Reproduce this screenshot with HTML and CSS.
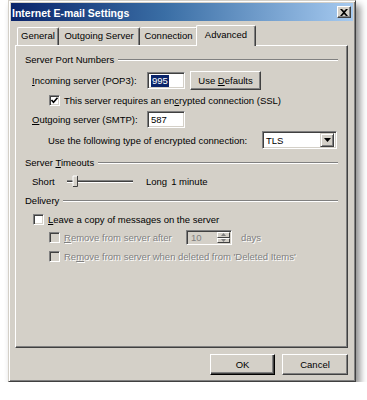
FILE: index.html
```html
<!DOCTYPE html>
<html>
<head>
<meta charset="utf-8">
<link rel="stylesheet" href="styles.css">
</head>
<body>
<div class="window">
  <div class="titlebar">
    <span class="title">Internet E-mail Settings</span>
    <span class="close"><svg width="8" height="7" viewBox="0 0 8 7"><path d="M0 0 L2 0 L4 2 L6 0 L8 0 L5 3.5 L8 7 L6 7 L4 5 L2 7 L0 7 L3 3.5 Z" fill="#000"/></svg></span>
  </div>
  <div class="body">
    <div class="tabs">
      <div class="tab t-general">General</div>
      <div class="tab t-out">Outgoing Server</div>
      <div class="tab t-conn">Connection</div>
      <div class="tab active t-adv">Advanced</div>
    </div>
    <div class="panel">
      <div class="group g-ports"><span>Server Port Numbers</span><i class="rule"></i></div>

      <div class="row r-in">
        <span class="label"><u>I</u>ncoming server (POP3):</span>
        <span class="field port"><span class="sel">995</span></span>
        <span class="btn defaults"><span>Use <u>D</u>efaults</span></span>
      </div>

      <div class="row r-ssl">
        <span class="cb"><svg width="9" height="9" viewBox="0 0 9 9"><path d="M1.5 4 L3.5 6.2 L7.5 1.8" fill="none" stroke="#000" stroke-width="1.6"/></svg></span>
        <span>This server requires an en<u>c</u>rypted connection (SSL)</span>
      </div>

      <div class="row r-out">
        <span class="label"><u>O</u>utgoing server (SMTP):</span>
        <span class="field port">587</span>
      </div>

      <div class="row r-enc">
        <span>Use the following type of encrypted connection:</span>
        <span class="select"><span class="val">TLS</span><span class="drop"><svg width="7" height="4" viewBox="0 0 7 4"><path d="M0 0 L7 0 L3.5 4 Z" fill="#000"/></svg></span></span>
      </div>

      <div class="group g-time"><span>Server <u>T</u>imeouts</span><i class="rule"></i></div>

      <div class="row r-slider">
        <span class="short">Short</span>
        <svg class="slider" width="66" height="12" viewBox="0 0 66 12">
          <rect x="0" y="5" width="66" height="1" fill="#808080"/>
          <rect x="0" y="6" width="66" height="1" fill="#404040"/>
          <rect x="0" y="7" width="66" height="1" fill="#ffffff"/>
          <rect x="6" y="1" width="5" height="10" fill="#d4d0c8"/>
          <path d="M6 11 V1 H10" fill="none" stroke="#ffffff" stroke-width="1"/>
          <path d="M10.5 1 V11.5 H6" fill="none" stroke="#404040" stroke-width="1"/>
        </svg>
        <span class="long">Long</span>
        <span class="minute">1 minute</span>
      </div>

      <div class="group g-del"><span>Delivery</span><i class="rule"></i></div>

      <div class="row r-leave">
        <span class="cb"></span>
        <span><u>L</u>eave a copy of messages on the server</span>
      </div>

      <div class="row r-after">
        <span class="cb dis"></span>
        <span class="dtext after"><u>R</u>emove from server after</span>
        <span class="spin"><span class="val">10</span><span class="arrows"><span class="ar"><svg width="5" height="3" viewBox="0 0 5 3"><path d="M0 3 L5 3 L2.5 0 Z" fill="#808080"/></svg></span><span class="ar"><svg width="5" height="3" viewBox="0 0 5 3"><path d="M0 0 L5 0 L2.5 3 Z" fill="#808080"/></svg></span></span></span>
        <span class="dtext days">days</span>
      </div>

      <div class="row r-deleted">
        <span class="cb dis"></span>
        <span class="dtext">Re<u>m</u>ove from server when deleted from 'Deleted Items'</span>
      </div>
    </div>
    <div class="buttons">
      <span class="btn ok">OK</span>
      <span class="btn cancel">Cancel</span>
    </div>
  </div>
</div>
</body>
</html>
```

FILE: styles.css
```css
html, body {
  margin: 0;
  padding: 0;
  background: #ffffff;
}

body {
  font-family: "Liberation Sans", Arial, sans-serif;
  font-size: 9.5px;
  color: #000;
}

u {
  text-decoration: underline;
  text-underline-offset: 1px;
}

.window {
  box-sizing: border-box;
  width: 348px;
  height: 382px;
  margin-left: 8px;
  background: #d4d0c8;
  border: 1px solid;
  border-color: #d4d0c8 #404040 #404040 #d4d0c8;
  box-shadow: inset 1px 1px 0 #ffffff, inset -1px -1px 0 #808080, 4px 5px 7px rgba(0, 0, 0, 0.45);
  padding: 2px;
}

.titlebar {
  height: 18px;
  display: flex;
  align-items: center;
  background: linear-gradient(to right, #0a246a, #3a6ea5 45%, #a6caf0);
  padding-left: 1px;
}

.title {
  flex: 1;
  color: #ffffff;
  font-weight: bold;
  font-size: 10.5px;
  line-height: 18px;
  padding-top: 1px;
}

.close {
  box-sizing: border-box;
  width: 14px;
  height: 12px;
  margin-right: 2px;
  background: #d4d0c8;
  border: 1px solid;
  border-color: #ffffff #404040 #404040 #ffffff;
  box-shadow: inset -1px -1px 0 #808080;
  display: flex;
  align-items: center;
  justify-content: center;
  padding-right: 1px;
}

.body {
  padding: 0 5px 0 4px;
}

.tabs {
  display: flex;
  height: 20px;
  margin-top: 4px;
  padding-left: 2px;
  position: relative;
  z-index: 1;
}

.tab {
  box-sizing: border-box;
  height: 18px;
  margin-top: 2px;
  border-top: 1px solid #ffffff;
  border-left: 1px solid #ffffff;
  border-right: 1px solid #404040;
  box-shadow: inset -1px 0 0 #808080;
  border-radius: 2px 2px 0 0;
  text-align: center;
  line-height: 16px;
  background: #d4d0c8;
}

.t-general { width: 42px; }
.t-out { width: 81px; border-left: none; }
.t-conn { width: 58px; border-left: none; }

.tab.active {
  width: 60px;
  height: 21px;
  margin-top: 0;
  margin-left: -2px;
  border-left: 1px solid #ffffff;
  line-height: 18px;
  position: relative;
  z-index: 2;
}

.panel {
  box-sizing: border-box;
  width: 333px;
  height: 303px;
  border: 1px solid;
  border-color: #ffffff #404040 #404040 #ffffff;
  box-shadow: inset -1px -1px 0 #808080;
  padding: 0 9px;
}

.group {
  display: flex;
  align-items: center;
  height: 13px;
}

.rule {
  flex: 1;
  height: 0;
  border-top: 1px solid #808080;
  border-bottom: 1px solid #ffffff;
  margin-left: 4px;
}

.g-ports { margin-top: 7px; }
.g-time { margin-top: 7px; }
.g-del { margin-top: 6px; }

.row {
  display: flex;
  align-items: center;
}

.r-in { margin-top: 5px; height: 19px; padding-left: 7px; }
.r-ssl { margin-top: 4px; height: 13px; padding-left: 24px; }
.r-out { margin-top: 4px; height: 17px; padding-left: 7px; }
.r-enc { margin-top: 3px; height: 18px; padding-left: 23px; }
.r-slider { margin-top: 5px; height: 14px; padding-left: 7px; }
.r-leave { margin-top: 6px; height: 13px; padding-left: 8px; }
.r-after { margin-top: 4px; height: 15px; padding-left: 24px; }
.r-deleted { margin-top: 5px; height: 13px; padding-left: 24px; }

.label {
  width: 115px;
}

.field {
  box-sizing: border-box;
  height: 17px;
  background: #ffffff;
  border: 1px solid;
  border-color: #808080 #ffffff #ffffff #808080;
  box-shadow: inset 1px 1px 0 #404040, inset -1px -1px 0 #d4d0c8;
  padding: 0 3px;
  display: flex;
  align-items: center;
}

.port {
  width: 38px;
}

.sel {
  background: #0a246a;
  color: #ffffff;
  padding: 0 1px;
  line-height: 12px;
}

.btn {
  box-sizing: border-box;
  display: flex;
  align-items: center;
  justify-content: center;
  background: #d4d0c8;
  border: 1px solid;
  border-color: #ffffff #404040 #404040 #ffffff;
  box-shadow: inset -1px -1px 0 #808080;
}

.defaults {
  width: 71px;
  height: 19px;
  margin-left: 5px;
}

.cb {
  box-sizing: border-box;
  width: 11px;
  height: 11px;
  background: #ffffff;
  border: 1px solid;
  border-color: #808080 #ffffff #ffffff #808080;
  box-shadow: inset 1px 1px 0 #404040, inset -1px -1px 0 #d4d0c8;
  margin-right: 4px;
  display: flex;
  align-items: center;
  justify-content: center;
  flex: none;
}

.cb.dis {
  background: #d4d0c8;
}

.select {
  box-sizing: border-box;
  width: 75px;
  height: 18px;
  margin-left: auto;
  margin-right: 1px;
  background: #ffffff;
  border: 1px solid;
  border-color: #808080 #ffffff #ffffff #808080;
  box-shadow: inset 1px 1px 0 #404040, inset -1px -1px 0 #d4d0c8;
  display: flex;
  align-items: center;
  padding: 2px;
}

.select .val {
  flex: 1;
  padding-left: 1px;
}

.drop {
  box-sizing: border-box;
  width: 14px;
  height: 14px;
  background: #d4d0c8;
  border: 1px solid;
  border-color: #d4d0c8 #404040 #404040 #d4d0c8;
  box-shadow: inset 1px 1px 0 #ffffff, inset -1px -1px 0 #808080;
  display: flex;
  align-items: center;
  justify-content: center;
}

.short {
  width: 35px;
}

.slider {
  display: block;
}

.long {
  margin-left: 13px;
}

.minute {
  margin-left: 4px;
}

.dtext {
  color: #808080;
  text-shadow: 1px 1px 0 #ffffff;
}

.after {
  width: 122px;
}

.spin {
  box-sizing: border-box;
  width: 46px;
  height: 15px;
  background: #d4d0c8;
  border: 1px solid;
  border-color: #808080 #ffffff #ffffff #808080;
  box-shadow: inset 1px 1px 0 #404040, inset -1px -1px 0 #d4d0c8;
  display: flex;
  align-items: center;
  padding: 1px;
}

.spin .val {
  flex: 1;
  color: #808080;
  padding-left: 3px;
}

.arrows {
  display: flex;
  flex-direction: column;
  width: 13px;
  height: 11px;
}

.ar {
  box-sizing: border-box;
  flex: 1;
  background: #d4d0c8;
  border: 1px solid;
  border-color: #ffffff #404040 #404040 #ffffff;
  display: flex;
  align-items: center;
  justify-content: center;
}

.days {
  margin-left: 9px;
}

.buttons {
  display: flex;
  justify-content: flex-end;
  gap: 7px;
  margin-top: 6px;
}

.ok, .cancel {
  height: 21px;
}

.ok {
  width: 65px;
  border-color: #ffffff #000000 #000000 #ffffff;
  box-shadow: inset -1px -1px 0 #404040, inset -2px -2px 0 #808080;
}

.cancel {
  width: 66px;
}
```
